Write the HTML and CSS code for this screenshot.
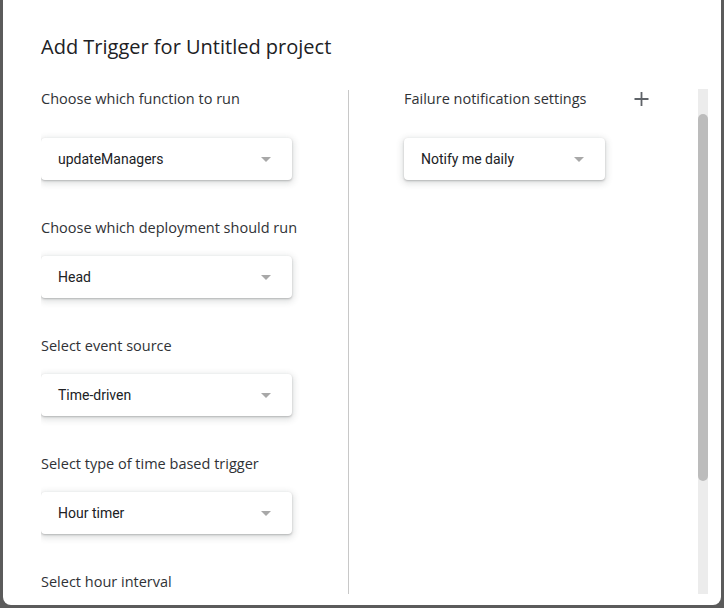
FILE: index.html
```html
<!DOCTYPE html>
<html>
<head>
<meta charset="utf-8">
<link rel="stylesheet" href="styles.css">
</head>
<body>
<div class="dialog">
  <h1 class="title">Add Trigger for Untitled project</h1>
  <div class="content">
    <div class="col-left">
      <div class="field first">
        <div class="label">Choose which function to run</div>
        <div class="select"><span>updateManagers</span><i class="arrow"></i></div>
      </div>
      <div class="field">
        <div class="label">Choose which deployment should run</div>
        <div class="select"><span>Head</span><i class="arrow"></i></div>
      </div>
      <div class="field">
        <div class="label">Select event source</div>
        <div class="select"><span>Time-driven</span><i class="arrow"></i></div>
      </div>
      <div class="field">
        <div class="label">Select type of time based trigger</div>
        <div class="select"><span>Hour timer</span><i class="arrow"></i></div>
      </div>
      <div class="field">
        <div class="label">Select hour interval</div>
      </div>
    </div>
    <div class="col-right">
      <div class="field first">
        <div class="label row"><span>Failure notification settings</span>
          <svg class="plus" width="15" height="14" viewBox="0 0 15 14"><path d="M7.5 0v14M0.5 7h14" stroke="#5f6368" stroke-width="1.8" fill="none"/></svg>
        </div>
        <div class="select small"><span>Notify me daily</span><i class="arrow"></i></div>
      </div>
    </div>
    <div class="scrollbar"><div class="thumb"></div></div>
  </div>
</div>
</body>
</html>
```
FILE: styles.css
```css
html, body {
  margin: 0;
  padding: 0;
  height: 608px;
  overflow: hidden;
  background: #5b5b5b;
}
.dialog {
  margin: 0 3px;
  height: 605px;
  background: #fff;
  border-radius: 0 0 8px 8px;
  overflow: hidden;
  box-sizing: border-box;
  padding-top: 33px;
}
.title {
  margin: 0 0 0 38px;
  font-family: "Open Sans", sans-serif;
  font-weight: 400;
  font-size: 20px;
  line-height: 28px;
  color: #202124;
}
.content {
  margin-top: 28px;
  height: 505px;
  display: flex;
  position: relative;
}
.col-left {
  width: 308px;
  margin-left: 38px;
  border-right: 1px solid #c8c8c8;
  margin-top: 1px;
  overflow: hidden;
  box-sizing: border-box;
}
.col-left .field.first {
  margin-top: -1px;
}
.col-right {
  padding-left: 55px;
}
.field {
  margin-bottom: 38px;
}
.label {
  font-family: "Open Sans", sans-serif;
  font-size: 14.5px;
  line-height: 20px;
  color: #303236;
  margin-bottom: 18px;
}
.field.first .label {
  margin-bottom: 29px;
}
.label.row {
  display: flex;
  align-items: center;
  justify-content: space-between;
  width: 245px;
}
.select {
  width: 251px;
  height: 42px;
  border-radius: 4px;
  background: #fff;
  box-shadow: 0 1px 2px rgba(60,64,67,.3), 0 2px 6px 2px rgba(60,64,67,.15);
  display: flex;
  align-items: center;
  box-sizing: border-box;
  padding: 0 21px 0 17px;
  font-family: Roboto, sans-serif;
  font-size: 14px;
  color: #202124;
}
.select.small {
  width: 201px;
}
.select span {
  flex: 1;
}
.arrow {
  width: 0;
  height: 0;
  border-left: 5px solid transparent;
  border-right: 5px solid transparent;
  border-top: 5px solid #a8a8a8;
}
.scrollbar {
  position: absolute;
  left: 695px;
  top: 0;
  width: 10px;
  height: 505px;
  background: #ececec;
}
.thumb {
  margin-top: 25px;
  height: 367px;
  background: #bcbcbc;
  border-radius: 5px;
}
```
